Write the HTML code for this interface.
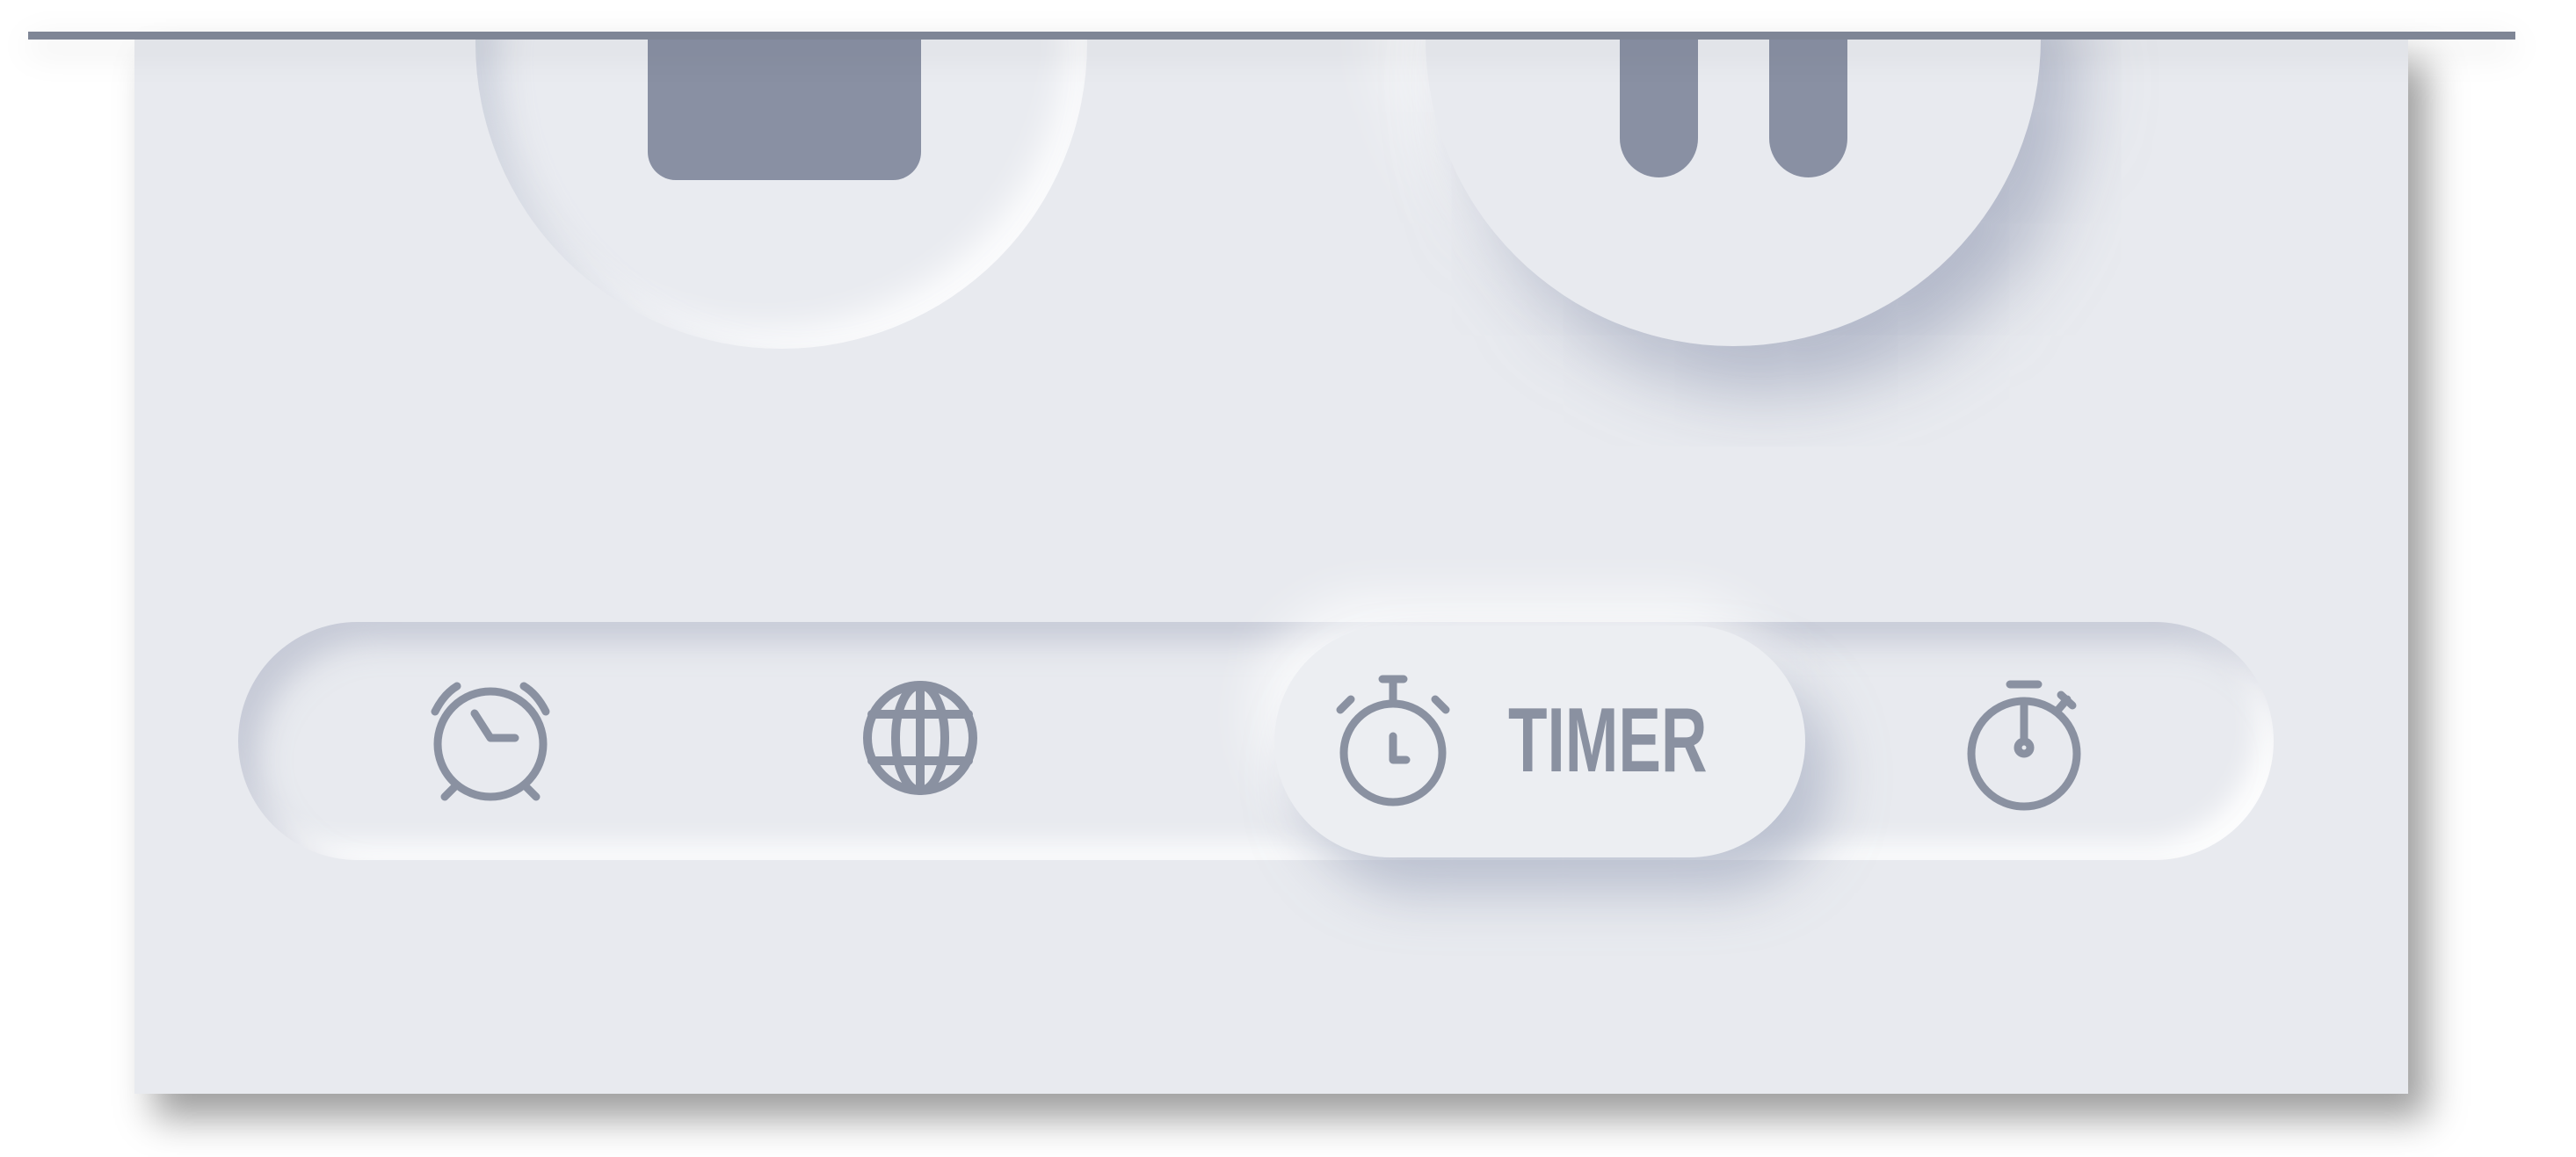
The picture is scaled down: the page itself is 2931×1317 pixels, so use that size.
<!DOCTYPE html>
<html><head><meta charset="utf-8"><style>
html,body{margin:0;padding:0;background:#fff;width:2931px;height:1317px;overflow:hidden;position:relative}
.panel{position:absolute;left:153px;top:43px;width:2587px;height:1202px;background:#e8eaef;overflow:hidden;box-shadow:22px 28px 40px rgba(0,0,0,.38)}
.bar{position:absolute;left:32px;top:36px;width:2830px;height:9px;background:#7f8696;box-shadow:0 12px 40px rgba(0,0,0,.15)}
.c1{position:absolute;left:388px;top:-342px;width:696px;height:696px;border-radius:50%;background:#e9ebf0;box-shadow:inset 22px 22px 40px rgba(165,172,192,.45),inset -20px -20px 40px rgba(255,255,255,.9)}
.sq{position:absolute;left:584px;top:-20px;width:311px;height:182px;border-radius:0 0 32px 32px;background:#8990a3}
.c2{position:absolute;left:1469px;top:-349px;width:700px;height:700px;border-radius:50%;background:#e8eaef;box-shadow:40px 50px 80px rgba(150,158,182,.65),-40px -40px 80px rgba(255,255,255,.85)}
.pb{position:absolute;top:-20px;width:89px;height:179px;border-radius:0 0 45px 45px;background:#8990a3}
.track{position:absolute;left:118px;top:665px;width:2316px;height:271px;border-radius:136px;background:#e8eaef;box-shadow:inset 22px 22px 34px rgba(165,172,192,.5),inset -18px -18px 30px rgba(255,255,255,.95)}
.pill{position:absolute;left:1297px;top:669px;width:604px;height:264px;border-radius:132px;background:#eceef2;box-shadow:30px 40px 60px rgba(150,158,182,.55),-20px -30px 60px rgba(255,255,255,.8)}
.txt{position:absolute;left:1563px;top:748px;font-family:"Liberation Sans",sans-serif;font-weight:bold;font-size:104px;color:#8a91a1;transform:scaleX(.7);transform-origin:left top;line-height:1;letter-spacing:0}
svg{position:absolute;left:0;top:0}
</style></head><body>
<div class="panel">
<div class="c1"></div>
<div class="sq"></div>
<div class="c2"></div>
<div class="pb" style="left:1690px"></div>
<div class="pb" style="left:1860px"></div>
<div class="track"></div>
<div class="pill"></div>
<div class="txt">TIMER</div>
</div>
<div class="bar"></div>
<svg width="2931" height="1317" viewBox="0 0 2931 1317" fill="none" stroke="#8a91a1" stroke-width="9" stroke-linecap="round" stroke-linejoin="round">
<circle cx="558" cy="847" r="60"/>
<path d="M540 812 L558 840 L586 840"/>
<path d="M495 810 Q505 790 520 781"/>
<path d="M621 810 Q611 790 596 781"/>
<path d="M518 895 L506 907"/>
<path d="M598 895 L610 907"/>
<g stroke-width="10">
<circle cx="1047" cy="840" r="60"/>
<ellipse cx="1047" cy="840" rx="28" ry="60"/>
<path d="M1047 780 V900 M992 813 H1102 M992 866 H1102"/>
</g>
<circle cx="1585" cy="857" r="56"/>
<path d="M1585 801 V773 M1573 773 H1597 M1585 838 V865 H1600"/>
<path d="M1525 808 L1537 796 M1645 808 L1633 796"/>
<circle cx="2303" cy="858" r="60"/>
<path d="M2287 779 H2319 M2303 798 V843"/>
<circle cx="2303" cy="851" r="7"/>
<path d="M2340 810 L2352 796 M2345 791 L2358 803"/>
</svg>
</body></html>
